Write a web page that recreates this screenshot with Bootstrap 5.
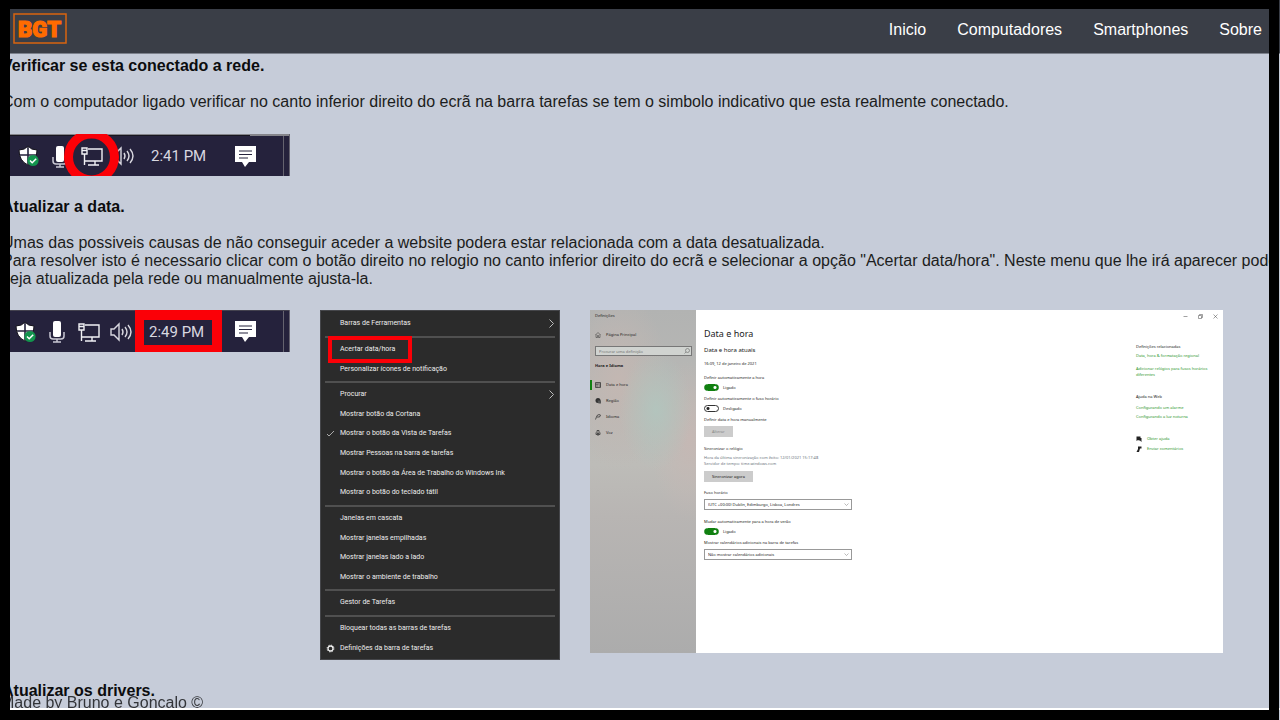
<!DOCTYPE html>
<html lang="pt">
<head>
<meta charset="utf-8">
<meta name="viewport" content="width=device-width, initial-scale=1">
<title>BGT - Rede</title>
<link rel="stylesheet" href="https://cdn.jsdelivr.net/npm/bootstrap@5.3.0/dist/css/bootstrap.min.css">
<style>
body{background:#c6ccd9;color:#0c0c0e;font:16px/18px "Liberation Sans",Arial,sans-serif;overflow-x:hidden}
.frame{position:fixed;inset:0 1px 0 0;border:solid #000;border-width:9px 10px 10px;pointer-events:none;z-index:20}
.topbar{background:#3a3e47;border-bottom:1px solid #7c818c;padding:13px 3px 6px 13px}
.topbar .nav-link{color:#fff;padding:8px 15px 8px 16px;line-height:18px}
.logo{display:block;width:54px;height:31px}
.article{padding-top:3px;white-space:nowrap;overflow:hidden}
.article h2,.article p{font-size:16px;line-height:18px;margin:0 0 18px;padding-left:2px}
.article h2{font-weight:700}
.article p{color:#1c1d20}
.tray{display:block;width:290px;height:42px}
.tray-net{margin:23px 0 22px}
.shots{gap:30px;margin-top:22px;margin-bottom:22px}
.foot{position:fixed;left:0;right:0;bottom:10px;height:16px;padding-left:1px;overflow:hidden;border-bottom:2px solid #fff;color:#333539}

/* taskbar context menu */
.ctx{width:240px;height:350px;background:#2b2b2b;border:1px solid #45464a;padding:3px 0 1px;font:7px/9px Roboto,sans-serif;color:#ededed}
.ctx li{flex:1 1 0;padding:0 5px 0 5px}
.ctx li.rule{flex:0 0 6px;padding:2px 4px}
.ctx hr{margin:0;height:2px;background:#505050;border:0;opacity:1}
.ctx .slot{width:14px;height:9px}
.ctx .picked{outline:4px solid #fb0007;padding:5px 13px 5px 8px;margin-left:-8px}

/* settings window */
.win{width:633px;height:343px;background:#fff;font:4px/6px "Noto Sans",sans-serif;color:#222}
.side{width:106px;padding:3px 4px 0 5px;background:radial-gradient(ellipse 36px 60px at 66px 100px,#b3c4bd,transparent),radial-gradient(ellipse 50px 90px at 28px 70px,#c3b7b2,transparent),radial-gradient(ellipse 40px 80px at 100px 130px,#c5b8b4,transparent),linear-gradient(#b2b3b2,#bdbcb8 45%,#b8b5b3 60%,#acacac)}
.side a{color:#222;text-decoration:none;height:16px;gap:5px;margin-left:-5px;padding-left:3px;border-left:2px solid transparent}
.side a.on{border-image:linear-gradient(transparent 25%,#108010 25% 75%,transparent 75%) 1}
.side svg,.help svg{width:6px;height:6px}
.find{position:relative;margin:3px 0 7px}
.find input{display:block;width:100%;height:10px;border:1px solid #777;background:#d0d3d0;padding:0 3px;font-size:4px;line-height:6px;color:#555}
.find svg{position:absolute;right:2px;top:2px}
.opts{width:148px;margin-left:8px;padding-top:19px}
.opts h3{font-size:9px;line-height:10px;font-weight:400;margin:0 0 7px}
.opts h4{font-size:6px;line-height:8px;font-weight:400;margin:0 0 7px}
.opts label{display:block}
.opts button{height:11px;border:0;background:#ccc;font-size:4px;line-height:6px;padding:0 8px;color:#111}
.opts button:disabled{color:#888}
.opts select{display:block;width:100%;height:11px;border:1px solid #999;background:#fff;font-size:4px;line-height:6px;padding:0 3px;appearance:none;color:#222}
.pick{position:relative;margin:3px 0 9px}
.pick svg{position:absolute;right:3px;top:3px;width:5px;height:5px}
.tog{gap:4px;height:7px;margin:3px 0 5px}
.tog input{appearance:none;width:15px;height:7px;border-radius:4px;border:1px solid #333;margin:0;background:radial-gradient(circle at 3px 50%,#222 1px,#fff 2px)}
.tog input:checked{border-color:#108010;background:radial-gradient(circle at 10px 50%,#fff 1px,#108010 2px)}
.help{width:82px;margin-right:5px;padding-top:4px}
.help a{display:block;color:#2d962d;text-decoration:none}
.ctl{gap:10px;height:4px;margin-bottom:26px}
.ctl svg{width:5px;height:5px}
</style>
</head>
<body>
<svg width="0" height="0" class="position-absolute" aria-hidden="true">
  <defs>
    <g id="shield"><path d="M0 4Q6 4 9 0Q12 4 18 4Q18 15 9 19Q0 15 0 4Z" fill="#fff" stroke="#16151d"/><path d="M9 1V18M1 9H17" stroke="#25233d" stroke-width="1.6"/><circle cx="14" cy="14.500" r="5.600" fill="#12944d"/><path d="M11 14.500l2.200 2.200 4-4" fill="none" stroke="#fff" stroke-width="1.500"/></g>
    <g id="mic"><rect x="4" width="8" height="16" rx="2" fill="#fff"/><path d="M1 11v4q0 3 3 3h8q3 0 3-3v-4M8 18v3M4 21h8" fill="none" stroke="#c9c8d3" stroke-width="1.500"/></g>
    <g id="net" fill="none" stroke="#f1f1f5" stroke-width="1.400"><path d="M7 2h14v12H4M14 14v4M7 18h11"/><path d="M1 1h5v6H1zM1 3.500h5M3.500 7v11"/></g>
    <g id="sound" fill="none" stroke="#d9d8e0" stroke-width="1.400"><path d="M1 6h3l5-5v16l-5-5H1z"/><path d="M12 6q2 3 0 6M15 4q4 5 0 10M18 2q6 7 0 14"/></g>
    <g id="note"><path d="M0 0h21v16h-7l-4 5-3-5H0z" fill="#fff"/><path d="M4 5h13M4 8.500h13M4 12h9" stroke="#25233d" stroke-width="1.200"/></g>
  </defs>
</svg>

<nav class="topbar d-flex justify-content-between">
  <a href="#" aria-label="BGT"><svg class="logo" viewBox="0 0 54 31"><rect x="1" y="1" width="52" height="29" fill="none" stroke="#d9640f" stroke-width="1.500"/><text x="5" y="24" font-family="Roboto" font-weight="900" font-size="22" fill="#ff6b00" stroke="#ff6b00" stroke-width="1.200">BGT</text></svg></a>
  <div class="nav">
    <a class="nav-link" href="#">Inicio</a><a class="nav-link" href="#">Computadores</a><a class="nav-link" href="#">Smartphones</a><a class="nav-link" href="#">Sobre</a>
  </div>
</nav>

<main class="article">
  <h2>Verificar se esta conectado a rede.</h2>
  <p>Com o computador ligado verificar no canto inferior direito do ecrã na barra tarefas se tem o simbolo indicativo que esta realmente conectado.</p>
  <svg class="tray tray-net" viewBox="0 0 290 42" role="img" aria-label="Barra de tarefas">
    <path fill="#25223c" d="M0 0h290v42H0z"/><path fill="#17161f" d="M0 0h250v2H0z"/><path fill="#85858b" d="M250 0h40v2h-40zM0 0h250v1H0z"/><path d="M283.500 2v40M289.500 0v42" stroke="#65636f"/>
    <use href="#shield" x="19" y="12"/><use href="#mic" x="52" y="12"/><use href="#sound" x="112" y="13"/>
    <circle cx="91.500" cy="23" r="23" fill="#25223c" stroke="#fb0007" stroke-width="9"/>
    <use href="#net" x="81" y="13"/>
    <text x="151" y="27" font-family="Roboto" font-size="15" fill="#d9d8e0">2:41 PM</text>
    <use href="#note" x="235" y="12"/>
  </svg>
  <h2>Atualizar a data.</h2>
  <p class="mb-0">Umas das possiveis causas de não conseguir aceder a website podera estar relacionada com a data desatualizada.<br>Para resolver isto é necessario clicar com o botão direito no relogio no canto inferior direito do ecrã e selecionar a opção "Acertar data/hora". Neste menu que lhe irá aparecer pode pe<br>seja atualizada pela rede ou manualmente ajusta-la.</p>

  <div class="shots d-flex align-items-start">
    <svg class="tray flex-shrink-0" viewBox="0 0 290 42" role="img" aria-label="Relógio na barra de tarefas">
      <path fill="#25223c" d="M0 0h290v42H0z"/><path fill="#44424f" d="M0 0h290v1H0z"/><path d="M283.500 1v41M289.500 0v42" stroke="#65636f"/>
      <use href="#shield" x="16" y="12"/><use href="#mic" x="49" y="11"/><use href="#net" x="78" y="13"/><use href="#sound" x="110" y="13"/>
      <path d="M135 0h87v42h-87zM144 10v25h68V10z" fill="#fb0007" fill-rule="evenodd"/>
      <text x="149" y="27" font-family="Roboto" font-size="15" fill="#d9d8e0">2:49 PM</text>
      <use href="#note" x="235" y="11"/>
    </svg>

    <ul class="ctx list-unstyled d-flex flex-column flex-shrink-0 mb-0">
      <li class="d-flex align-items-center"><span class="slot"></span><span class="flex-fill">Barras de Ferramentas</span><svg width="5" height="9" viewBox="0 0 5 9"><path d="M.5.500l4 4-4 4" fill="none" stroke="#bbb"/></svg></li>
      <li class="rule"><hr></li>
      <li class="d-flex align-items-center"><span class="slot"></span><span class="picked">Acertar data/hora</span></li>
      <li class="d-flex align-items-center"><span class="slot"></span>Personalizar ícones de notificação</li>
      <li class="rule"><hr></li>
      <li class="d-flex align-items-center"><span class="slot"></span><span class="flex-fill">Procurar</span><svg width="5" height="9" viewBox="0 0 5 9"><path d="M.5.500l4 4-4 4" fill="none" stroke="#bbb"/></svg></li>
      <li class="d-flex align-items-center"><span class="slot"></span>Mostrar botão da Cortana</li>
      <li class="d-flex align-items-center"><svg class="slot" viewBox="0 0 14 9"><path d="M1 5l2 2 5-5" fill="none" stroke="#aaa"/></svg>Mostrar o botão da Vista de Tarefas</li>
      <li class="d-flex align-items-center"><span class="slot"></span>Mostrar Pessoas na barra de tarefas</li>
      <li class="d-flex align-items-center"><span class="slot"></span>Mostrar o botão da Área de Trabalho do Windows Ink</li>
      <li class="d-flex align-items-center"><span class="slot"></span>Mostrar o botão do teclado tátil</li>
      <li class="rule"><hr></li>
      <li class="d-flex align-items-center"><span class="slot"></span>Janelas em cascata</li>
      <li class="d-flex align-items-center"><span class="slot"></span>Mostrar janelas empilhadas</li>
      <li class="d-flex align-items-center"><span class="slot"></span>Mostrar janelas lado a lado</li>
      <li class="d-flex align-items-center"><span class="slot"></span>Mostrar o ambiente de trabalho</li>
      <li class="rule"><hr></li>
      <li class="d-flex align-items-center"><span class="slot"></span>Gestor de Tarefas</li>
      <li class="rule"><hr></li>
      <li class="d-flex align-items-center"><span class="slot"></span>Bloquear todas as barras de tarefas</li>
      <li class="d-flex align-items-center"><svg class="slot" viewBox="0 0 14 9"><circle cx="4.500" cy="4.500" r="2.500" fill="none" stroke="#eee" stroke-width="1.300"/><circle cx="4.500" cy="4.500" r="3.400" fill="none" stroke="#eee" stroke-dasharray="1.300 1.370"/></svg>Definições da barra de tarefas</li>
    </ul>

    <section class="win d-flex flex-shrink-0">
      <div class="side">
        <div class="mb-2">Definições</div>
        <a href="#" class="d-flex align-items-center"><svg viewBox="0 0 12 12"><path d="M1 6l5-5 5 5M2 5v6h3V7h2v4h3V5" fill="none" stroke="#333"/></svg>Página Principal</a>
        <div class="find"><input aria-label="Procurar" placeholder="Procurar uma definição"><svg viewBox="0 0 12 12"><circle cx="7" cy="5" r="4" fill="none" stroke="#555"/><path d="M4 8l-3 3" stroke="#555"/></svg></div>
        <div class="fw-bold mb-2">Hora e Idioma</div>
        <a href="#" class="on d-flex align-items-center"><svg viewBox="0 0 12 12"><path d="M1 1h10v10H1zM1 4h10M4 4v7M7 8h4" fill="none" stroke="#333" stroke-width="1.500"/></svg>Data e hora</a>
        <a href="#" class="d-flex align-items-center"><svg viewBox="0 0 12 12"><circle cx="6" cy="5" r="5" fill="#333"/><path d="M5 5h7v6H7z" fill="#555"/></svg>Região</a>
        <a href="#" class="d-flex align-items-center"><svg viewBox="0 0 12 12"><path d="M1 11l3-8 4-2 3 1-2 4H4" fill="none" stroke="#333" stroke-width="1.500"/></svg>Idioma</a>
        <a href="#" class="d-flex align-items-center"><svg viewBox="0 0 12 12"><path d="M4 1h4v6H4zM2 5v4h8V5M6 9v3" fill="none" stroke="#333" stroke-width="1.500"/></svg>Voz</a>
      </div>
      <div class="opts">
        <h3>Data e hora</h3>
        <h4>Data e hora atuais</h4>
        <div style="margin-bottom:8px">16:09, 12 de janeiro de 2021</div>
        <label for="t1">Definir automaticamente a hora</label>
        <div class="tog d-flex align-items-center"><input type="checkbox" id="t1" checked>Ligado</div>
        <label for="t2">Definir automaticamente o fuso horário</label>
        <div class="tog d-flex align-items-center"><input type="checkbox" id="t2">Desligado</div>
        <div>Definir data e hora manualmente</div>
        <button type="button" disabled style="margin:3px 0 9px">Alterar</button>
        <div>Sincronizar o relógio</div>
        <div class="text-secondary" style="margin-top:3px">Hora da última sincronização com êxito: 12/01/2021 15:17:48<br>Servidor de tempo: time.windows.com</div>
        <button type="button" class="d-block" style="margin:4px 0 8px">Sincronizar agora</button>
        <label for="z1">Fuso horário</label>
        <div class="pick"><select id="z1"><option>(UTC +00:00) Dublin, Edimburgo, Lisboa, Londres</option></select><svg viewBox="0 0 10 10"><path d="M1 3l4 4 4-4" fill="none" stroke="#777"/></svg></div>
        <label for="t3">Mudar automaticamente para a hora de verão</label>
        <div class="tog d-flex align-items-center"><input type="checkbox" id="t3" checked>Ligado</div>
        <label for="z2">Mostrar calendários adicionais na barra de tarefas</label>
        <div class="pick"><select id="z2"><option>Não mostrar calendários adicionais</option></select><svg viewBox="0 0 10 10"><path d="M1 3l4 4 4-4" fill="none" stroke="#777"/></svg></div>
      </div>
      <div class="help ms-auto">
        <div class="ctl d-flex justify-content-end"><svg viewBox="0 0 10 10"><path d="M1 5h8" stroke="#444"/></svg><svg viewBox="0 0 10 10"><path d="M1 3h6v6H1zM3 3V1h6v6H7" fill="none" stroke="#444"/></svg><svg viewBox="0 0 10 10"><path d="M1 1l8 8M9 1L1 9" stroke="#444"/></svg></div>
        <div>Definições relacionadas</div>
        <a href="#" style="margin-top:3px">Data, hora &amp; formatação regional</a>
        <a href="#" style="margin:7px 0 16px">Adicionar relógios para fusos horários<br>diferentes</a>
        <div>Ajuda na Web</div>
        <a href="#" style="margin:5px 0 3px">Configurando um alarme</a>
        <a href="#" style="margin-bottom:16px">Configurando a luz noturna</a>
        <div class="d-flex" style="gap:5px;margin-bottom:4px"><svg viewBox="0 0 12 12"><path d="M1 1h8v7H4L1 10zM5 4h6v8L8 9H5z" fill="#222"/></svg><a href="#">Obter ajuda</a></div>
        <div class="d-flex" style="gap:5px"><svg viewBox="0 0 12 12"><path d="M4 1h7v4H8L6 12H1l3-6z" fill="#222"/></svg><a href="#">Enviar comentários</a></div>
      </div>
    </section>
  </div>
  <h2 class="mb-0">Atualizar os drivers.</h2>
</main>
<footer class="foot">Made by Bruno e Gonçalo ©</footer>
<div class="frame"></div>
<script src="https://cdn.jsdelivr.net/npm/bootstrap@5.3.0/dist/js/bootstrap.bundle.min.js"></script>
</body>
</html>
